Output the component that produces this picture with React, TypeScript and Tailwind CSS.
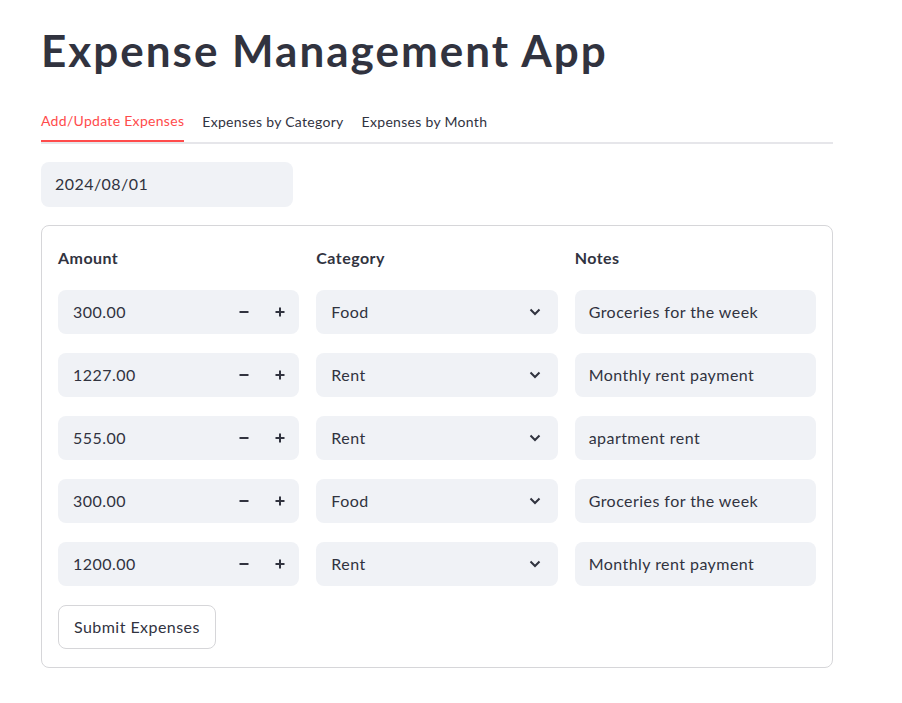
const rows = [
  { amount: "300.00", category: "Food", notes: "Groceries for the week" },
  { amount: "1227.00", category: "Rent", notes: "Monthly rent payment" },
  { amount: "555.00", category: "Rent", notes: "apartment rent" },
  { amount: "300.00", category: "Food", notes: "Groceries for the week" },
  { amount: "1200.00", category: "Rent", notes: "Monthly rent payment" },
];

function Minus() {
  return (
    <svg width="12" height="12" viewBox="0 0 12 12">
      <path d="M1.5 6h9" stroke="#31333f" strokeWidth="2" />
    </svg>
  );
}

function Plus() {
  return (
    <svg width="12" height="12" viewBox="0 0 12 12">
      <path d="M1.5 6h9M6 1.5v9" stroke="#31333f" strokeWidth="2" />
    </svg>
  );
}

function Chevron() {
  return (
    <svg width="12" height="8" viewBox="0 0 12 8">
      <path d="M1.5 1.5l4.5 4.5 4.5-4.5" fill="none" stroke="#31333f" strokeWidth="2" />
    </svg>
  );
}

function NumberInput({ value }: { value: string }) {
  return (
    <div className="h-[44px] rounded-lg bg-[#f0f2f6] flex items-center pl-[15px] pr-[13px]">
      <span className="flex-1">{value}</span>
      <div className="flex items-center gap-[24px]">
        <Minus />
        <Plus />
      </div>
    </div>
  );
}

function SelectInput({ value }: { value: string }) {
  return (
    <div className="h-[44px] rounded-lg bg-[#f0f2f6] flex items-center pl-[15px] pr-[17px]">
      <span className="flex-1">{value}</span>
      <Chevron />
    </div>
  );
}

function TextInput({ value }: { value: string }) {
  return (
    <div className="h-[44px] rounded-lg bg-[#f0f2f6] flex items-center pl-[14px]">
      <span>{value}</span>
    </div>
  );
}

export default function App() {
  return (
    <div className="min-h-screen bg-white text-[#31333f] font-['Lato',_sans-serif] text-base tracking-[0.45px]">
      <div className="w-[792px] ml-[41px] pt-[24px]">
        <h1 className="text-[44px] font-bold leading-[1.2] tracking-[2px]">Expense Management App</h1>

        <div className="mt-[25px] flex gap-[18px] border-b-2 border-[#e6e6ea] text-[14px] tracking-[0.3px]">
          <div className="h-[40px] flex items-center text-[#ff4b4b] border-b-2 border-[#ff4b4b] -mb-[2px]">
            Add/Update Expenses
          </div>
          <div className="h-[40px] flex items-center">Expenses by Category</div>
          <div className="h-[40px] flex items-center">Expenses by Month</div>
        </div>

        <div className="mt-[18px] w-[252px] h-[45px] rounded-lg bg-[#f0f2f6] flex items-center pl-[14px]">
          2024/08/01
        </div>

        <div className="mt-[18px] border border-[#d6d6d9] rounded-lg px-[16px] pt-[20px] pb-[18px]">
          <div className="grid grid-cols-3 gap-x-[17px] font-bold">
            <div className="h-[24px] flex items-center">Amount</div>
            <div className="h-[24px] flex items-center">Category</div>
            <div className="h-[24px] flex items-center">Notes</div>
          </div>
          <div className="mt-[20px] flex flex-col gap-[19px]">
            {rows.map((r, i) => (
              <div key={i} className="grid grid-cols-3 gap-x-[17px]">
                <NumberInput value={r.amount} />
                <SelectInput value={r.category} />
                <TextInput value={r.notes} />
              </div>
            ))}
          </div>
          <button className="mt-[19px] h-[44px] px-[15px] rounded-lg border border-[#d6d6d9] bg-white">
            Submit Expenses
          </button>
        </div>
      </div>
    </div>
  );
}
